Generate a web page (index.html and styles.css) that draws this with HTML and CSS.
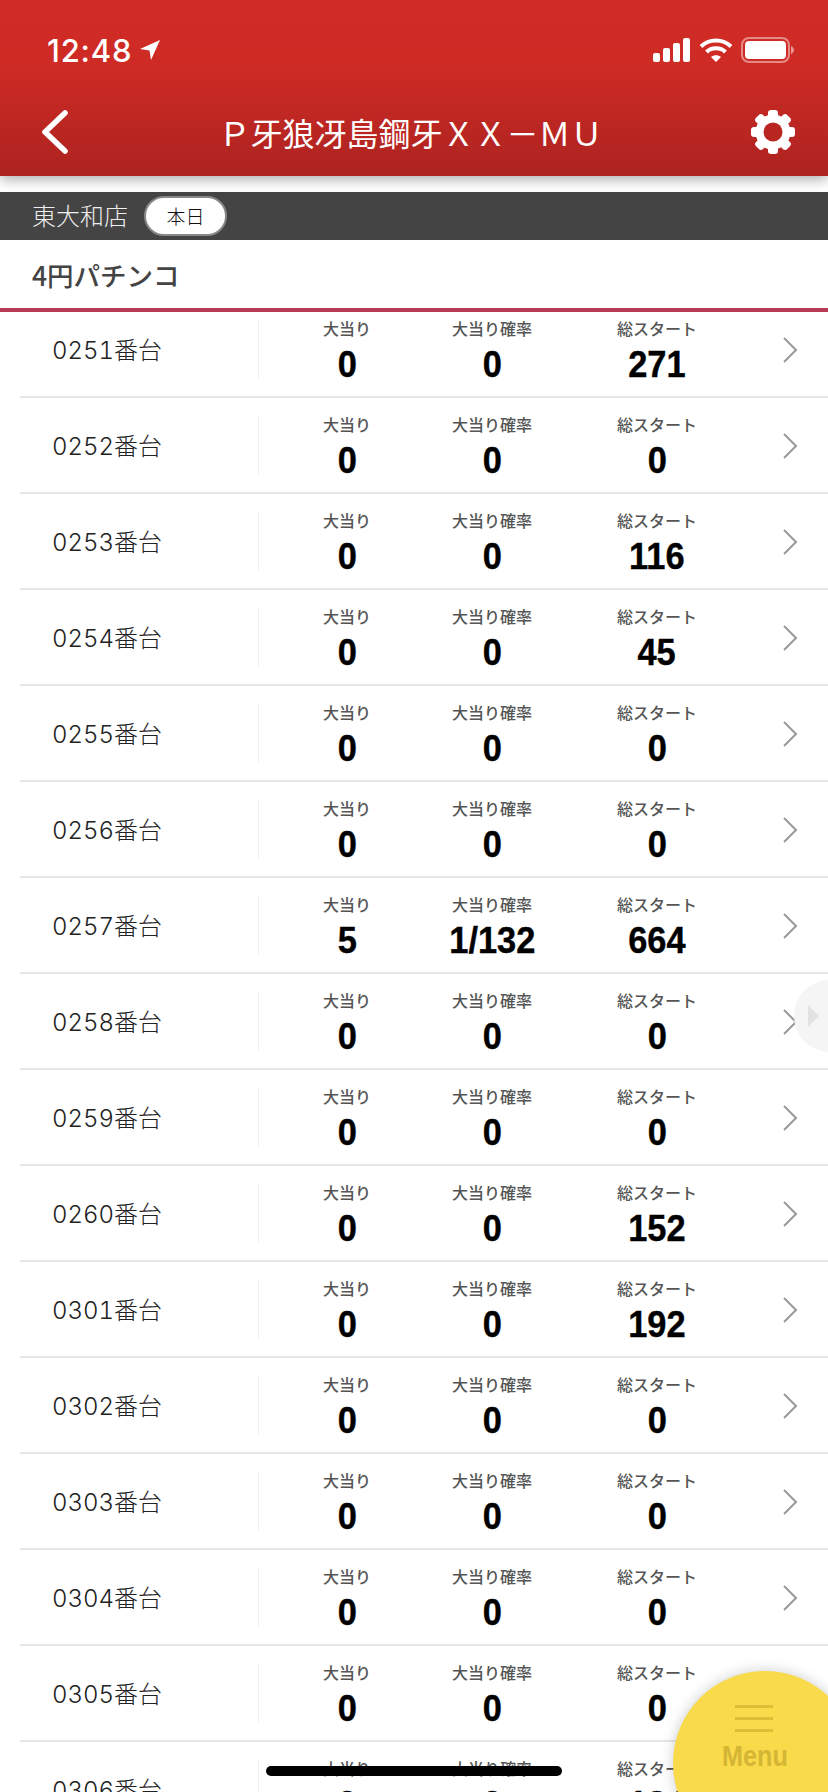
FILE: index.html
```html
<!DOCTYPE html>
<html lang="ja">
<head>
    <meta charset="UTF-8">
    <meta name="viewport" content="width=device-width, initial-scale=1.0">
    <title>P牙狼冴島鋼牙XX-MU</title>
    <link rel="stylesheet" href="styles.css">
</head>
<body>
    <div class="screen">
        <header class="top">
            <div class="status">
                <div class="time">12:48
                    <svg class="arrow" width="22" height="22" viewBox="0 0 22 22"><path d="M1 10 L21 1 L12 21 L10.5 11.5 Z" fill="#fff"/></svg>
                </div>
                <div class="status-icons">
                    <svg width="38" height="24" viewBox="0 0 38 24" fill="#fff">
                        <rect x="0" y="15" width="7" height="9" rx="2"/>
                        <rect x="10" y="10" width="7" height="14" rx="2"/>
                        <rect x="20" y="5" width="7" height="19" rx="2"/>
                        <rect x="30" y="0" width="7" height="24" rx="2"/>
                    </svg>
                    <svg width="34" height="24" viewBox="0 0 34 24" fill="none" stroke="#fff" stroke-width="4">
                        <path d="M2 8.5 C10 0.5 24 0.5 32 8.5"/>
                        <path d="M7.5 14 C12.5 9 21.5 9 26.5 14"/>
                        <path d="M12 19 L17 24 L22 19 C19 16.5 15 16.5 12 19 Z" fill="#fff" stroke="none"/>
                    </svg>
                    <svg width="54" height="26" viewBox="0 0 54 26">
                        <rect x="1" y="1" width="47" height="24" rx="7" fill="none" stroke="#fff" stroke-opacity=".45" stroke-width="2"/>
                        <rect x="4" y="4" width="41" height="18" rx="4" fill="#fff"/>
                        <path d="M50 9 C52 10 53 11.5 53 13 C53 14.5 52 16 50 17 Z" fill="#fff" fill-opacity=".5"/>
                    </svg>
                </div>
            </div>
            <div class="nav">
                <svg class="back" width="28" height="44" viewBox="0 0 28 44"><path d="M24 3 L4 22 L24 41" fill="none" stroke="#fff" stroke-width="5.5" stroke-linecap="round" stroke-linejoin="round"/></svg>
                <h1 class="title">Ｐ牙狼冴島鋼牙ＸＸ－ＭＵ</h1>
                <svg class="gear" width="46" height="46" viewBox="0 0 46 46">
                    <g fill="#fff">
                        <rect x="18" y="1" width="10" height="44" rx="3"/>
                        <rect x="18" y="1" width="10" height="44" rx="3" transform="rotate(45 23 23)"/>
                        <rect x="18" y="1" width="10" height="44" rx="3" transform="rotate(90 23 23)"/>
                        <rect x="18" y="1" width="10" height="44" rx="3" transform="rotate(135 23 23)"/>
                    </g>
                    <circle cx="23" cy="23" r="13.5" fill="none" stroke="#fff" stroke-width="8"/>
                    <circle cx="23" cy="23" r="9.5" fill="#b92622"/>
                </svg>
            </div>
        </header>

        <div class="shop-bar">
            <span class="shop">東大和店</span>
            <span class="day-pill">本日</span>
        </div>
        <h2 class="section">4円パチンコ</h2>

        <div class="list-clip">
            <ul class="machines">
                <li class="machine"><div class="name">0251番台</div><div class="stats"><div class="stat hit"><span>大当り</span><b>0</b></div><div class="stat rate"><span>大当り確率</span><b>0</b></div><div class="stat start"><span>総スタート</span><b>271</b></div></div><svg class="chev" width="16" height="26" viewBox="0 0 16 26"><path d="M2 1 L14 13 L2 25"/></svg></li>
                <li class="machine"><div class="name">0252番台</div><div class="stats"><div class="stat hit"><span>大当り</span><b>0</b></div><div class="stat rate"><span>大当り確率</span><b>0</b></div><div class="stat start"><span>総スタート</span><b>0</b></div></div><svg class="chev" width="16" height="26" viewBox="0 0 16 26"><path d="M2 1 L14 13 L2 25"/></svg></li>
                <li class="machine"><div class="name">0253番台</div><div class="stats"><div class="stat hit"><span>大当り</span><b>0</b></div><div class="stat rate"><span>大当り確率</span><b>0</b></div><div class="stat start"><span>総スタート</span><b>116</b></div></div><svg class="chev" width="16" height="26" viewBox="0 0 16 26"><path d="M2 1 L14 13 L2 25"/></svg></li>
                <li class="machine"><div class="name">0254番台</div><div class="stats"><div class="stat hit"><span>大当り</span><b>0</b></div><div class="stat rate"><span>大当り確率</span><b>0</b></div><div class="stat start"><span>総スタート</span><b>45</b></div></div><svg class="chev" width="16" height="26" viewBox="0 0 16 26"><path d="M2 1 L14 13 L2 25"/></svg></li>
                <li class="machine"><div class="name">0255番台</div><div class="stats"><div class="stat hit"><span>大当り</span><b>0</b></div><div class="stat rate"><span>大当り確率</span><b>0</b></div><div class="stat start"><span>総スタート</span><b>0</b></div></div><svg class="chev" width="16" height="26" viewBox="0 0 16 26"><path d="M2 1 L14 13 L2 25"/></svg></li>
                <li class="machine"><div class="name">0256番台</div><div class="stats"><div class="stat hit"><span>大当り</span><b>0</b></div><div class="stat rate"><span>大当り確率</span><b>0</b></div><div class="stat start"><span>総スタート</span><b>0</b></div></div><svg class="chev" width="16" height="26" viewBox="0 0 16 26"><path d="M2 1 L14 13 L2 25"/></svg></li>
                <li class="machine"><div class="name">0257番台</div><div class="stats"><div class="stat hit"><span>大当り</span><b>5</b></div><div class="stat rate"><span>大当り確率</span><b>1/132</b></div><div class="stat start"><span>総スタート</span><b>664</b></div></div><svg class="chev" width="16" height="26" viewBox="0 0 16 26"><path d="M2 1 L14 13 L2 25"/></svg></li>
                <li class="machine"><div class="name">0258番台</div><div class="stats"><div class="stat hit"><span>大当り</span><b>0</b></div><div class="stat rate"><span>大当り確率</span><b>0</b></div><div class="stat start"><span>総スタート</span><b>0</b></div></div><svg class="chev" width="16" height="26" viewBox="0 0 16 26"><path d="M2 1 L14 13 L2 25"/></svg></li>
                <li class="machine"><div class="name">0259番台</div><div class="stats"><div class="stat hit"><span>大当り</span><b>0</b></div><div class="stat rate"><span>大当り確率</span><b>0</b></div><div class="stat start"><span>総スタート</span><b>0</b></div></div><svg class="chev" width="16" height="26" viewBox="0 0 16 26"><path d="M2 1 L14 13 L2 25"/></svg></li>
                <li class="machine"><div class="name">0260番台</div><div class="stats"><div class="stat hit"><span>大当り</span><b>0</b></div><div class="stat rate"><span>大当り確率</span><b>0</b></div><div class="stat start"><span>総スタート</span><b>152</b></div></div><svg class="chev" width="16" height="26" viewBox="0 0 16 26"><path d="M2 1 L14 13 L2 25"/></svg></li>
                <li class="machine"><div class="name">0301番台</div><div class="stats"><div class="stat hit"><span>大当り</span><b>0</b></div><div class="stat rate"><span>大当り確率</span><b>0</b></div><div class="stat start"><span>総スタート</span><b>192</b></div></div><svg class="chev" width="16" height="26" viewBox="0 0 16 26"><path d="M2 1 L14 13 L2 25"/></svg></li>
                <li class="machine"><div class="name">0302番台</div><div class="stats"><div class="stat hit"><span>大当り</span><b>0</b></div><div class="stat rate"><span>大当り確率</span><b>0</b></div><div class="stat start"><span>総スタート</span><b>0</b></div></div><svg class="chev" width="16" height="26" viewBox="0 0 16 26"><path d="M2 1 L14 13 L2 25"/></svg></li>
                <li class="machine"><div class="name">0303番台</div><div class="stats"><div class="stat hit"><span>大当り</span><b>0</b></div><div class="stat rate"><span>大当り確率</span><b>0</b></div><div class="stat start"><span>総スタート</span><b>0</b></div></div><svg class="chev" width="16" height="26" viewBox="0 0 16 26"><path d="M2 1 L14 13 L2 25"/></svg></li>
                <li class="machine"><div class="name">0304番台</div><div class="stats"><div class="stat hit"><span>大当り</span><b>0</b></div><div class="stat rate"><span>大当り確率</span><b>0</b></div><div class="stat start"><span>総スタート</span><b>0</b></div></div><svg class="chev" width="16" height="26" viewBox="0 0 16 26"><path d="M2 1 L14 13 L2 25"/></svg></li>
                <li class="machine"><div class="name">0305番台</div><div class="stats"><div class="stat hit"><span>大当り</span><b>0</b></div><div class="stat rate"><span>大当り確率</span><b>0</b></div><div class="stat start"><span>総スタート</span><b>0</b></div></div><svg class="chev" width="16" height="26" viewBox="0 0 16 26"><path d="M2 1 L14 13 L2 25"/></svg></li>
                <li class="machine"><div class="name">0306番台</div><div class="stats"><div class="stat hit"><span>大当り</span><b>0</b></div><div class="stat rate"><span>大当り確率</span><b>0</b></div><div class="stat start"><span>総スタート</span><b>124</b></div></div><svg class="chev" width="16" height="26" viewBox="0 0 16 26"><path d="M2 1 L14 13 L2 25"/></svg></li>
            </ul>
        </div>

        <div class="side-tab"><i class="side-arrow"></i></div>
        <div class="menu-btn">
            <div class="menu-lines"><i></i><i></i><i></i></div>
            <div class="menu-label">Menu</div>
        </div>
        <div class="home-bar"></div>
    </div>
</body>
</html>
```
FILE: styles.css
```css
* {
    box-sizing: border-box;
}
html, body {
    margin: 0;
    padding: 0;
}
body {
    font-family: "Liberation Sans", "Noto Sans CJK JP", sans-serif;
    background-color: #fff;
    color: #222;
}
.screen {
    position: relative;
    width: 828px;
    height: 1792px;
    overflow: hidden;
}

/* header */
.top {
    position: relative;
    height: 176px;
    background: linear-gradient(#d02b26, #cf2b25 35%, #ad2320);
    box-shadow: 0 4px 12px rgba(0, 0, 0, 0.3);
    color: #fff;
}
.status {
    display: flex;
    justify-content: space-between;
    align-items: center;
    height: 100px;
    padding: 0 33px 0 47px;
}
.time {
    display: flex;
    align-items: center;
    gap: 7px;
    font-family: Inter, "Liberation Sans", sans-serif;
    font-size: 31px;
    font-weight: 500;
    letter-spacing: 0.8px;
}
.status-icons {
    display: flex;
    align-items: center;
    gap: 8px;
}
.nav {
    display: flex;
    justify-content: space-between;
    align-items: center;
    height: 64px;
    padding: 0 32px 0 41px;
}
.title {
    margin: 0 0 0 2px;
    font-family: "Noto Sans CJK JP", sans-serif;
    font-size: 32px;
    font-weight: 400;
    line-height: 64px;
}

/* shop bar */
.shop-bar {
    display: flex;
    align-items: center;
    gap: 16px;
    height: 48px;
    margin-top: 16px;
    padding-left: 32px;
    background-color: #444;
}
.shop {
    padding-bottom: 3px;
    font-family: "Noto Sans CJK JP", sans-serif;
    font-size: 24px;
    font-weight: 300;
    color: #eee;
}
.day-pill {
    width: 83px;
    height: 40px;
    border: 2px solid #888;
    border-radius: 20px;
    background-color: #fff;
    font-family: "Noto Sans CJK JP", sans-serif;
    font-size: 19px;
    font-weight: 300;
    line-height: 35px;
    text-align: center;
    color: #111;
}
.section {
    height: 72px;
    margin: 0;
    padding-left: 32px;
    border-bottom: 4px solid #b93a55;
    font-family: "Noto Sans CJK JP", sans-serif;
    font-size: 26.5px;
    font-weight: 500;
    line-height: 70px;
    color: #444;
}

/* list, scrolled a little under the section line */
.list-clip {
    height: 1480px;
    overflow: hidden;
}
.machines {
    margin: -10px 0 0;
    padding: 0 0 0 20px;
    list-style: none;
}
.machine {
    display: flex;
    align-items: center;
    height: 96px;
    border-bottom: 2px solid #e6e6e6;
}
.name {
    width: 238px;
    padding: 0 0 2px 32px;
    font-family: Inter, "Noto Sans CJK JP", sans-serif;
    font-size: 24px;
    font-weight: 300;
    font-variant-numeric: tabular-nums;
    color: #222;
}
.stats {
    display: flex;
    height: 58px;
    border-left: 1px solid #eee;
}
.stat {
    display: flex;
    flex-direction: column;
    align-items: center;
}
.stat.hit {
    width: 176px;
}
.stat.rate {
    width: 114px;
}
.stat.start {
    width: 216px;
}
.stat span {
    font-family: "Noto Sans CJK JP", sans-serif;
    font-size: 16px;
    font-weight: 500;
    line-height: 16px;
    white-space: nowrap;
    color: #555;
}
.stat b {
    margin-top: 7px;
    font-family: "Liberation Sans", sans-serif;
    font-size: 37px;
    line-height: 44px;
    color: #000;
    -webkit-text-stroke: 0.4px #000;
    transform: scaleX(0.93);
}
.chev {
    margin: 2px 0 0 17px;
}
.chev path {
    fill: none;
    stroke: #999;
    stroke-width: 2;
}

/* floating bits */
.side-tab {
    position: absolute;
    top: 980px;
    left: 794px;
    width: 72px;
    height: 72px;
    border-radius: 50%;
    background-color: #f5f5f5;
}
.side-arrow {
    position: absolute;
    top: 25px;
    left: 14px;
    border-top: 11px solid transparent;
    border-bottom: 11px solid transparent;
    border-left: 11px solid #e2e2e2;
}
.menu-btn {
    position: absolute;
    top: 1671px;
    left: 673px;
    width: 184px;
    height: 184px;
    padding: 34px 0 0 9px;
    border-radius: 50%;
    background-color: #f8da4b;
    box-shadow: 0 0 14px rgba(0, 0, 0, 0.2);
}
.menu-lines {
    display: flex;
    flex-direction: column;
    gap: 9px;
    width: 38px;
    margin-left: 53px;
}
.menu-lines i {
    display: block;
    height: 3px;
    background-color: #dcbd38;
}
.menu-label {
    width: 146px;
    margin-top: 8px;
    font-family: "Liberation Sans", sans-serif;
    font-size: 29px;
    font-weight: 700;
    line-height: 32px;
    text-align: center;
    color: #d4b634;
    transform: scaleX(0.87);
}
.home-bar {
    position: absolute;
    top: 1766px;
    left: 266px;
    width: 296px;
    height: 10px;
    border-radius: 5px;
    background-color: #000;
}
```
